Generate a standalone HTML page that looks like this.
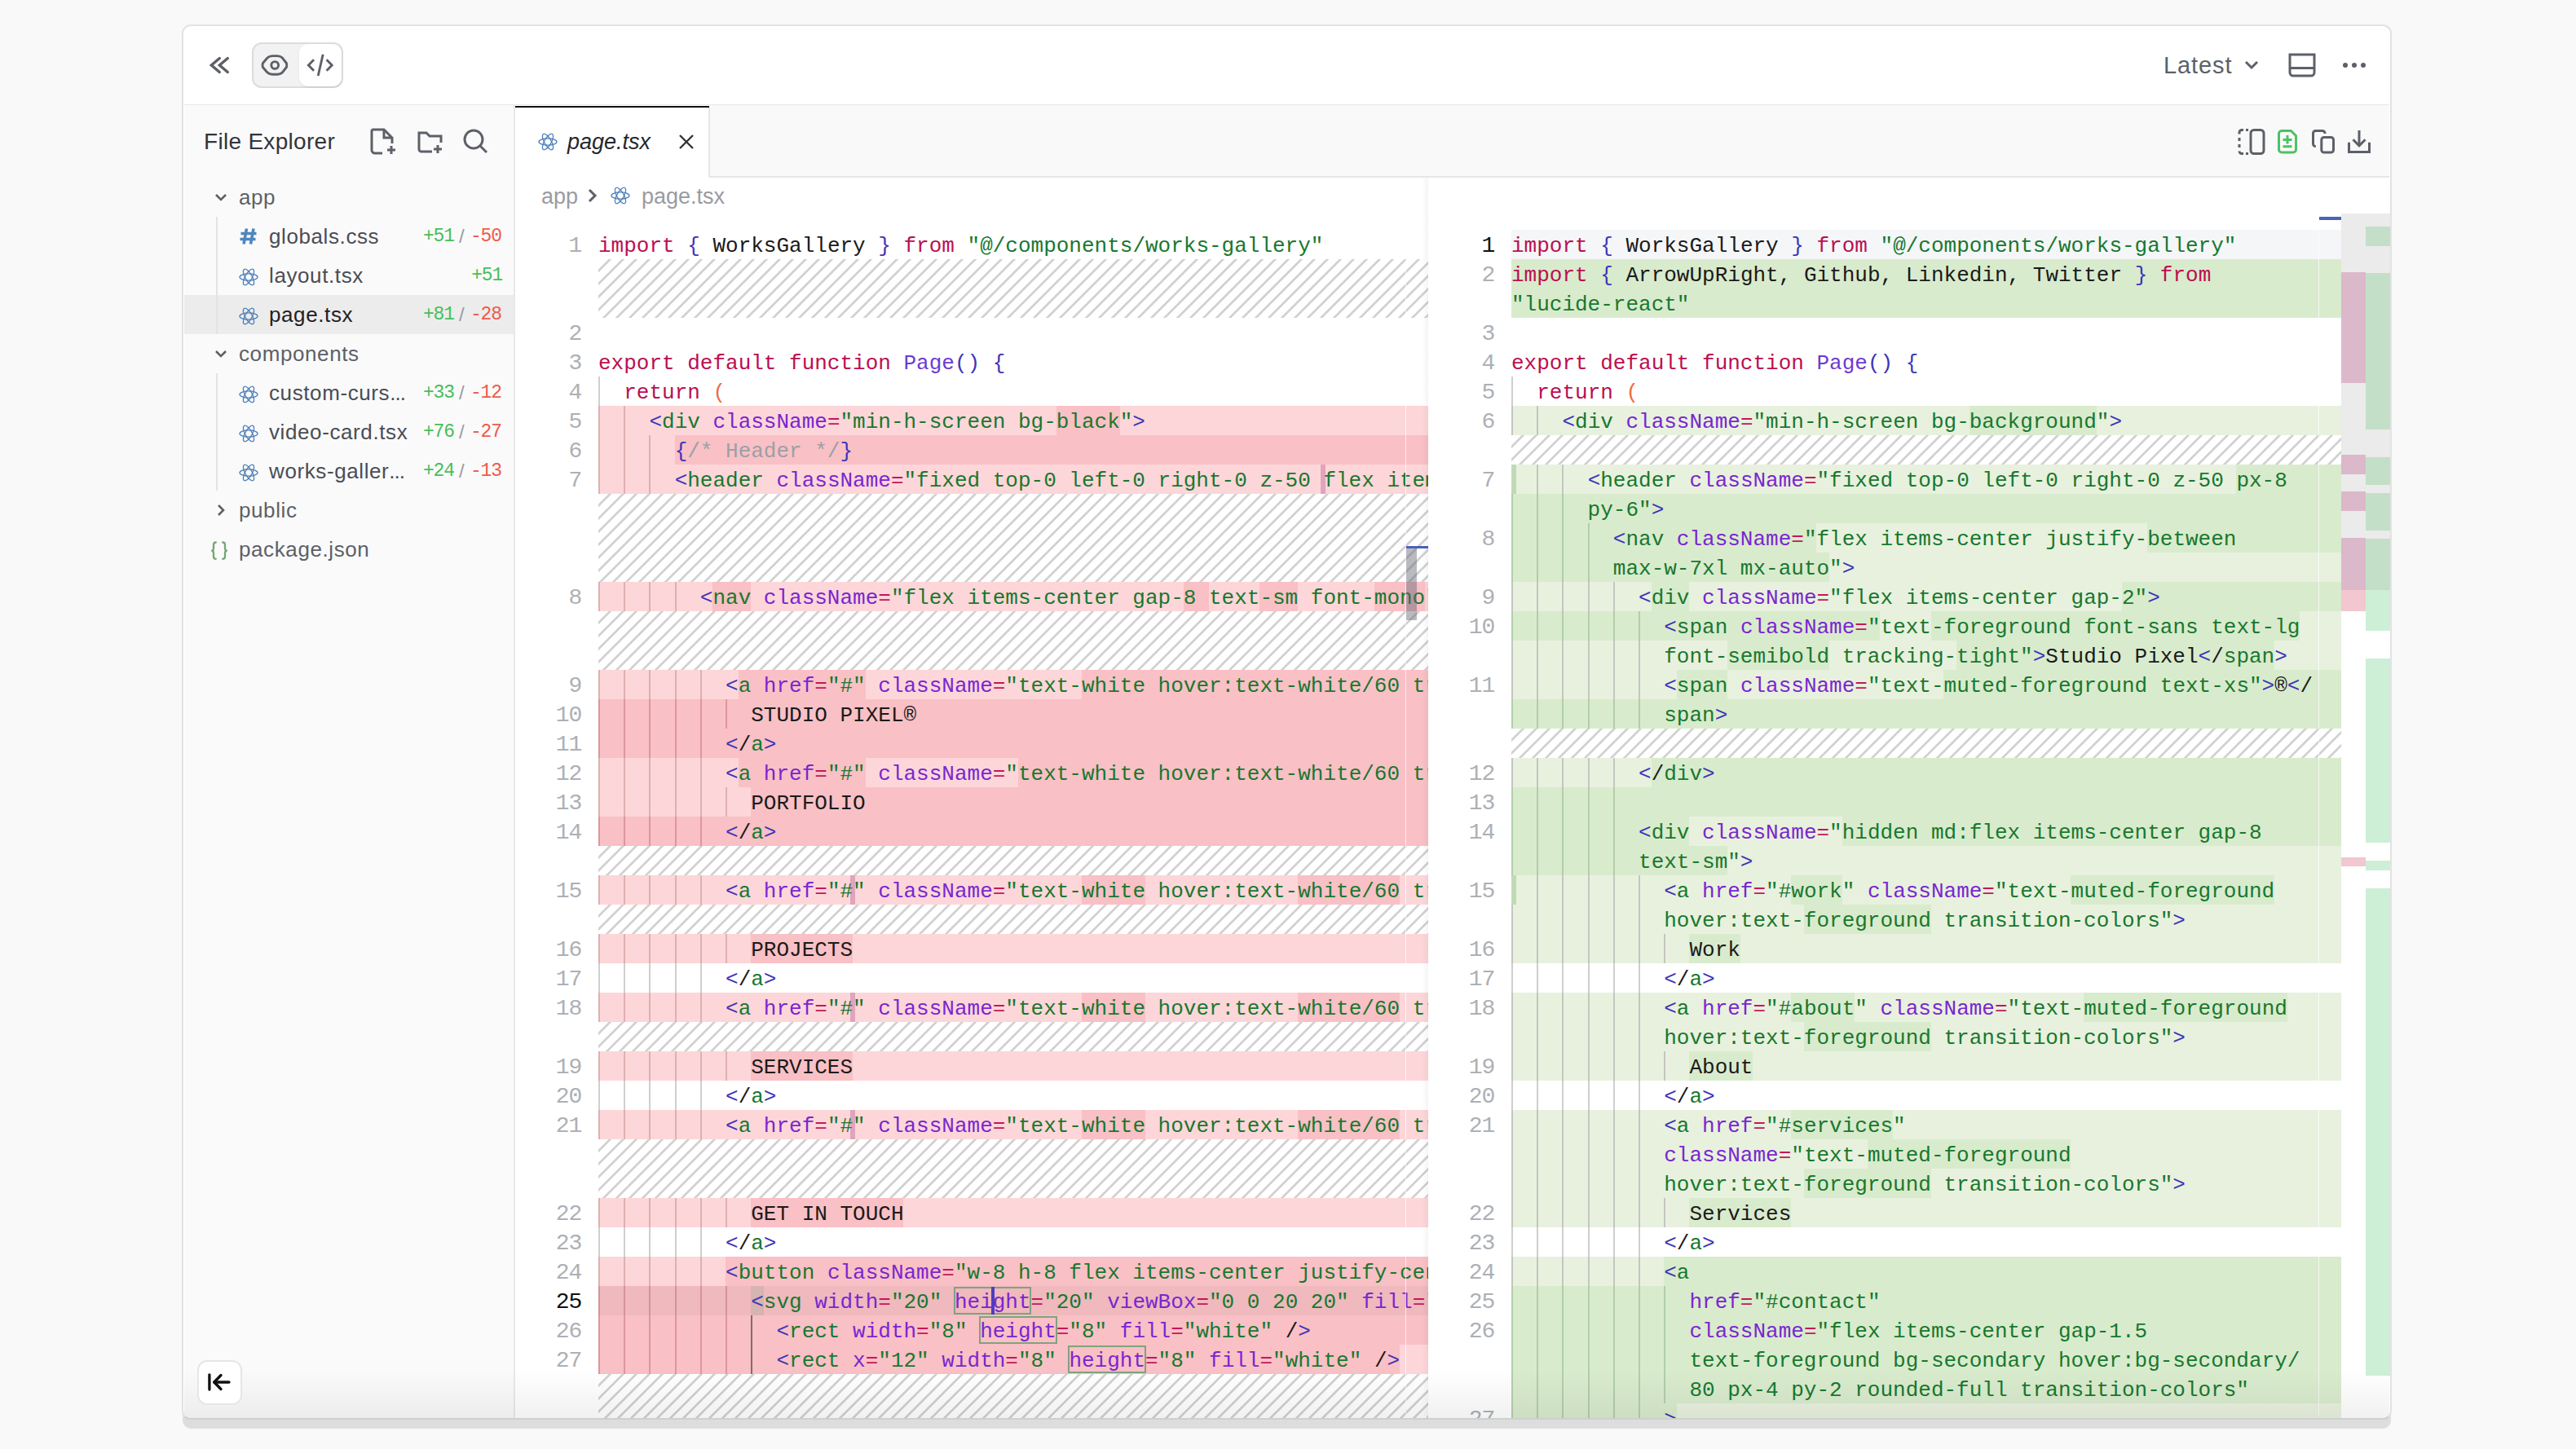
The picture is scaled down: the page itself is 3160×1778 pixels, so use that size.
<!DOCTYPE html><html><head><meta charset="utf-8"><style>
*{margin:0;padding:0;box-sizing:border-box}
html,body{width:3160px;height:1778px;overflow:hidden;background:#f9f9f9;font-family:"Liberation Sans",sans-serif}
.abs{position:absolute}
.card{position:absolute;left:223px;top:30px;width:2711px;height:1712px;background:#fff;border:2px solid #e1e3e3;border-bottom-color:#cdd1cd;border-radius:11px;overflow:hidden;box-shadow:0 12px 1px -1px rgba(0,0,0,0.11)}
.bg{position:absolute;height:36px}
.guide{position:absolute;width:2px;height:36px;background:rgba(0,0,0,0.18)}
.box{position:absolute;height:34px;border:2px solid #7fa37f}
.hatch{position:absolute;background-color:#fff;background-size:16px 16px;background-image:linear-gradient(-45deg,#d3d3d3 12.5%,rgba(211,211,211,0) 12.5%,rgba(211,211,211,0) 50%,#d3d3d3 50%,#d3d3d3 62.5%,rgba(211,211,211,0) 62.5%,rgba(211,211,211,0) 100%)}
.ln{position:absolute;width:80px;height:36px;text-align:right;font-family:"Liberation Mono",monospace;font-size:28px;letter-spacing:-1.2px;line-height:39px;color:#adb0b5}
.ln.cur{color:#111}
.code{position:absolute;height:36px;white-space:pre;font-family:"Liberation Mono",monospace;font-size:26px;letter-spacing:0.00px;line-height:40px;color:#1a1a1a}
.side{position:absolute;font-size:26px;letter-spacing:0.6px;color:#5d6068;white-space:pre;line-height:48px}
.stat{position:absolute;font-family:"Liberation Mono",monospace;font-size:23px;letter-spacing:-1.2px;line-height:48px;white-space:pre}
</style></head><body><div class="card"><div class="abs" style="left:-225px;top:-32px;width:3160px;height:1778px">
<div class="abs" style="left:226px;top:128px;width:2705px;height:2px;background:#e8e8e8"></div>
<div class="abs" style="left:226px;top:129px;width:404px;height:1611px;background:#fafafa"></div>
<div class="abs" style="left:630px;top:129px;width:2px;height:1611px;background:#e8e8e8"></div>
<div class="abs" style="left:632px;top:129px;width:2299px;height:87px;background:#f9f9f9"></div>
<div class="abs" style="left:632px;top:216px;width:2299px;height:2px;background:#e6e6e6"></div>
<div class="abs" style="left:632px;top:129px;width:238px;height:89px;background:#fff"></div>
<div class="abs" style="left:632px;top:130px;width:238px;height:2px;background:#111"></div>
<div class="abs" style="left:869px;top:132px;width:2px;height:85px;background:#e6e6e6"></div>
<svg class="abs" style="left:250px;top:62px" width="40" height="36" viewBox="0 0 40 36" fill="none" stroke="#5d6068" stroke-width="3.4" stroke-linecap="round" stroke-linejoin="miter"><path d="M19.3 9.5L9.3 18l10 8.5"/><path d="M29.3 9.5l-10 8.5 10 8.5"/></svg>
<div class="abs" style="left:309px;top:52px;width:112px;height:56px;border:2px solid #dcdcdc;border-radius:12px;background:#f2f2f2"></div>
<div class="abs" style="left:367px;top:54px;width:52px;height:52px;border-radius:11px;background:#fff;box-shadow:0 1px 2px rgba(0,0,0,0.10)"></div>
<svg class="abs" style="left:315px;top:62px" width="44" height="36" viewBox="0 0 44 36" fill="none" stroke="#5d6068" stroke-width="2.9" stroke-linejoin="round"><path d="M7.4 15.5L13.2 8.8Q15.6 6.6 19 6.6L25.4 6.6Q28.8 6.6 31.2 8.8L36.4 15.5Q37.2 18 36.4 20.5L31.2 27.2Q28.8 29.3 25.4 29.3L19 29.3Q15.6 29.3 13.2 27.2L7.4 20.5Q6.6 18 7.4 15.5Z"/><circle cx="22.2" cy="18" r="4.4"/></svg>
<svg class="abs" style="left:372px;top:62px" width="44" height="36" viewBox="0 0 44 36" fill="none" stroke="#5d6068" stroke-width="2.9" stroke-linecap="butt" stroke-linejoin="miter"><path d="M13 11.3L6.4 18l6.6 6.7"/><path d="M28.6 11.3l6.6 6.7-6.6 6.7"/><path d="M24.2 4.8L18.2 31"/></svg>
<div class="abs" style="left:2654px;top:50px;font-size:29px;line-height:60px;color:#5d6068;letter-spacing:0.9px">Latest</div>
<svg class="abs" style="left:2750px;top:70px" width="24" height="20" viewBox="0 0 24 20" fill="none" stroke="#5d6068" stroke-width="3"><path d="M5 6l7 7 7-7"/></svg>
<svg class="abs" style="left:2806px;top:64px" width="36" height="32" viewBox="0 0 36 32" fill="none" stroke="#5d6068" stroke-width="3"><path d="M3 3h30v22a4 4 0 0 1-4 4H7a4 4 0 0 1-4-4z"/><path d="M3 19.5h30"/></svg>
<div class="abs" style="left:2874px;top:77px;width:6px;height:6px;border-radius:50%;background:#5d6068"></div>
<div class="abs" style="left:2885px;top:77px;width:6px;height:6px;border-radius:50%;background:#5d6068"></div>
<div class="abs" style="left:2896px;top:77px;width:6px;height:6px;border-radius:50%;background:#5d6068"></div>
<div class="abs" style="left:250px;top:150px;font-size:28px;line-height:48px;color:#32353a;letter-spacing:0.3px">File Explorer</div>
<svg class="abs" style="left:452px;top:156px" width="36" height="36" viewBox="0 0 36 36" fill="none" stroke="#5d6068" stroke-width="3"><path d="M17 32H8a4 4 0 0 1-4-4V5a2 2 0 0 1 2-2h13l10 10v7"/><path d="M19 3v10h10"/><path d="M28 23v10M23 28h10"/></svg>
<svg class="abs" style="left:510px;top:156px" width="36" height="36" viewBox="0 0 36 36" fill="none" stroke="#5d6068" stroke-width="3"><path d="M20 30H7a3 3 0 0 1-3-3V7h9l4 4h14v8"/><path d="M27 22v10M22 27h10"/></svg>
<svg class="abs" style="left:566px;top:156px" width="36" height="36" viewBox="0 0 36 36" fill="none" stroke="#5d6068" stroke-width="3"><circle cx="15" cy="15" r="11"/><path d="M23 23l8 8"/></svg>
<div class="abs" style="left:226px;top:362px;width:404px;height:48px;background:#ececec"></div>
<div class="abs" style="left:265px;top:266px;width:2px;height:144px;background:#e3e3e3"></div>
<div class="abs" style="left:265px;top:458px;width:2px;height:144px;background:#e3e3e3"></div>
<svg class="abs" style="left:261px;top:232px" width="20" height="20" viewBox="0 0 20 20" fill="none" stroke="#5d6068" stroke-width="2.6"><path d="M4 7l6 6 6-6"/></svg>
<div class="side" style="left:293px;top:218px">app</div>
<svg class="abs" style="left:293px;top:279px" width="24" height="22" viewBox="0 0 24 22" fill="none" stroke="#4f86bd" stroke-width="3.6"><path d="M9.5 1.5L6 20.5M18 1.5l-3.5 19M2.5 7.5h19M1.5 14.5h19"/></svg>
<div class="side" style="left:330px;top:266px;color:#4a4d55">globals.css</div>
<div class="stat" style="left:519px;top:266px;color:#47bf5b">+51</div><div class="abs" style="left:563px;top:266px;font-size:24px;line-height:48px;color:#9b9ba5">/</div><div class="stat" style="left:577px;top:266px;color:#ef5b4c">-50</div>
<svg style="position:absolute;left:292.5px;top:327.5px" width="24" height="24" viewBox="0 0 24 24" fill="none" stroke="#4d7fb8" stroke-width="1.3"><ellipse cx="12" cy="12" rx="11" ry="4.2"/><ellipse cx="12" cy="12" rx="11" ry="4.2" transform="rotate(60 12 12)"/><ellipse cx="12" cy="12" rx="11" ry="4.2" transform="rotate(120 12 12)"/></svg>
<div class="side" style="left:330px;top:314px;color:#4a4d55">layout.tsx</div>
<div class="stat" style="left:500px;top:314px;width:116px;text-align:right;color:#47bf5b">+51</div>
<svg style="position:absolute;left:292.5px;top:375.5px" width="24" height="24" viewBox="0 0 24 24" fill="none" stroke="#4d7fb8" stroke-width="1.3"><ellipse cx="12" cy="12" rx="11" ry="4.2"/><ellipse cx="12" cy="12" rx="11" ry="4.2" transform="rotate(60 12 12)"/><ellipse cx="12" cy="12" rx="11" ry="4.2" transform="rotate(120 12 12)"/></svg>
<div class="side" style="left:330px;top:362px;color:#1f2024">page.tsx</div>
<div class="stat" style="left:519px;top:362px;color:#47bf5b">+81</div><div class="abs" style="left:563px;top:362px;font-size:24px;line-height:48px;color:#9b9ba5">/</div><div class="stat" style="left:577px;top:362px;color:#ef5b4c">-28</div>
<svg class="abs" style="left:261px;top:424px" width="20" height="20" viewBox="0 0 20 20" fill="none" stroke="#5d6068" stroke-width="2.6"><path d="M4 7l6 6 6-6"/></svg>
<div class="side" style="left:293px;top:410px">components</div>
<svg style="position:absolute;left:292.5px;top:471.5px" width="24" height="24" viewBox="0 0 24 24" fill="none" stroke="#4d7fb8" stroke-width="1.3"><ellipse cx="12" cy="12" rx="11" ry="4.2"/><ellipse cx="12" cy="12" rx="11" ry="4.2" transform="rotate(60 12 12)"/><ellipse cx="12" cy="12" rx="11" ry="4.2" transform="rotate(120 12 12)"/></svg>
<div class="side" style="left:330px;top:458px;color:#4a4d55">custom-curs<span style="letter-spacing:-1px">...</span></div>
<div class="stat" style="left:519px;top:458px;color:#47bf5b">+33</div><div class="abs" style="left:563px;top:458px;font-size:24px;line-height:48px;color:#9b9ba5">/</div><div class="stat" style="left:577px;top:458px;color:#ef5b4c">-12</div>
<svg style="position:absolute;left:292.5px;top:519.5px" width="24" height="24" viewBox="0 0 24 24" fill="none" stroke="#4d7fb8" stroke-width="1.3"><ellipse cx="12" cy="12" rx="11" ry="4.2"/><ellipse cx="12" cy="12" rx="11" ry="4.2" transform="rotate(60 12 12)"/><ellipse cx="12" cy="12" rx="11" ry="4.2" transform="rotate(120 12 12)"/></svg>
<div class="side" style="left:330px;top:506px;color:#4a4d55">video-card.tsx</div>
<div class="stat" style="left:519px;top:506px;color:#47bf5b">+76</div><div class="abs" style="left:563px;top:506px;font-size:24px;line-height:48px;color:#9b9ba5">/</div><div class="stat" style="left:577px;top:506px;color:#ef5b4c">-27</div>
<svg style="position:absolute;left:292.5px;top:567.5px" width="24" height="24" viewBox="0 0 24 24" fill="none" stroke="#4d7fb8" stroke-width="1.3"><ellipse cx="12" cy="12" rx="11" ry="4.2"/><ellipse cx="12" cy="12" rx="11" ry="4.2" transform="rotate(60 12 12)"/><ellipse cx="12" cy="12" rx="11" ry="4.2" transform="rotate(120 12 12)"/></svg>
<div class="side" style="left:330px;top:554px;color:#4a4d55">works-galler<span style="letter-spacing:-1px">...</span></div>
<div class="stat" style="left:519px;top:554px;color:#47bf5b">+24</div><div class="abs" style="left:563px;top:554px;font-size:24px;line-height:48px;color:#9b9ba5">/</div><div class="stat" style="left:577px;top:554px;color:#ef5b4c">-13</div>
<svg class="abs" style="left:261px;top:616px" width="20" height="20" viewBox="0 0 20 20" fill="none" stroke="#5d6068" stroke-width="2.6"><path d="M7 4l6 6-6 6"/></svg>
<div class="side" style="left:293px;top:602px">public</div>
<svg class="abs" style="left:254px;top:660px" width="32" height="32" viewBox="0 0 32 32" fill="none" stroke="#74a874" stroke-width="2.3" stroke-linecap="round"><path d="M10.8 5.5Q8 5.5 8 8.3V13Q8 15.7 5.2 15.7Q8 15.7 8 18.4V23Q8 25.8 10.8 25.8"/><path d="M19.2 5.5Q22 5.5 22 8.3V13Q22 15.7 24.8 15.7Q22 15.7 22 18.4V23Q22 25.8 19.2 25.8"/></svg>
<div class="side" style="left:293px;top:650px">package.json</div>
<svg style="position:absolute;left:660.0px;top:162.0px" width="24" height="24" viewBox="0 0 24 24" fill="none" stroke="#4d7fb8" stroke-width="1.3"><ellipse cx="12" cy="12" rx="11" ry="4.2"/><ellipse cx="12" cy="12" rx="11" ry="4.2" transform="rotate(60 12 12)"/><ellipse cx="12" cy="12" rx="11" ry="4.2" transform="rotate(120 12 12)"/></svg>
<div class="abs" style="left:696px;top:150px;font-size:27px;font-style:italic;line-height:48px;color:#26272b">page.tsx</div>
<svg class="abs" style="left:831px;top:163px" width="22" height="22" viewBox="0 0 22 22" fill="none" stroke="#333" stroke-width="2.4"><path d="M3 3l16 16M19 3L3 19"/></svg>
<svg class="abs" style="left:2744px;top:156px" width="36" height="36" viewBox="0 0 36 36" fill="none" stroke="#5d6068" stroke-width="3"><path d="M8 3.5H6a3 3 0 0 0-3 3v2M3 13v4M3 21v4M3 29.5v0a3 3 0 0 0 3 3h2" stroke-linecap="butt"/><path d="M11 3.5h3M11 32.5h3"/><rect x="17" y="3.5" width="16" height="29" rx="4"/></svg>
<svg class="abs" style="left:2790px;top:155px" width="34" height="38" viewBox="0 0 34 38" fill="none" stroke="#4cc265" stroke-width="3"><path d="M9 5.5H20.4L26.5 11.6V28.5A3.5 3.5 0 0 1 23 32H9A3.5 3.5 0 0 1 5.5 28.5V9A3.5 3.5 0 0 1 9 5.5Z"/><path d="M16 11v10.4M10.5 16.5h11M10.5 24.7h11"/></svg>
<svg class="abs" style="left:2830px;top:155px" width="38" height="38" viewBox="0 0 38 38" fill="none" stroke="#5d6068" stroke-width="3"><rect x="17.8" y="13.5" width="14.7" height="18.5" rx="3"/><path d="M10.8 24.5H10.5A3 3 0 0 1 7.5 21.5V8.5A3 3 0 0 1 10.5 5.5H19A3 3 0 0 1 22 8.5V9"/></svg>
<svg class="abs" style="left:2876px;top:155px" width="36" height="36" viewBox="0 0 36 36" fill="none" stroke="#5d6068" stroke-width="3"><path d="M5.5 19.8V31.5H30.5V19.8"/><path d="M18 5V23.5"/><path d="M10.5 16.3l7.5 7.5 7.5-7.5"/></svg>
<div class="abs" style="left:664px;top:217px;font-size:27px;line-height:48px;color:#9a9ba3">app</div>
<svg class="abs" style="left:716px;top:230px" width="20" height="20" viewBox="0 0 20 20" fill="none" stroke="#5d6068" stroke-width="3"><path d="M7 3l7 7-7 7"/></svg>
<svg style="position:absolute;left:749.0px;top:228.0px" width="24" height="24" viewBox="0 0 24 24" fill="none" stroke="#4d7fb8" stroke-width="1.3"><ellipse cx="12" cy="12" rx="11" ry="4.2"/><ellipse cx="12" cy="12" rx="11" ry="4.2" transform="rotate(60 12 12)"/><ellipse cx="12" cy="12" rx="11" ry="4.2" transform="rotate(120 12 12)"/></svg>
<div class="abs" style="left:787px;top:217px;font-size:27px;line-height:48px;color:#9a9ba3">page.tsx</div>
<div class="abs" style="left:632px;top:218px;width:1120px;height:1522px;overflow:hidden">
<div class="abs" style="left:-632px;top:-218px;width:3160px;height:1778px">
<div class="ln" style="left:633px;top:282px">1</div>
<div class="code" style="left:734.0px;top:282px"><span style="color:#bb0e52">import</span> <span style="color:#3d35b8">{</span> <span style="color:#1a1a1a">WorksGallery</span> <span style="color:#3d35b8">}</span> <span style="color:#bb0e52">from</span> <span style="color:#18782f">&quot;@/components/works-gallery&quot;</span></div>
<div class="hatch" style="left:734px;top:318px;width:1018px;height:72px"></div><div class="hatch" style="left:1725px;top:318px;width:27px;height:72px;background-position:1px 0"></div>
<div class="ln" style="left:633px;top:390px">2</div>
<div class="ln" style="left:633px;top:426px">3</div>
<div class="code" style="left:734.0px;top:426px"><span style="color:#bb0e52">export</span> <span style="color:#bb0e52">default</span> <span style="color:#bb0e52">function</span> <span style="color:#6b3bd2">Page</span><span style="color:#3d35b8">(</span><span style="color:#3d35b8">)</span> <span style="color:#3d35b8">{</span></div>
<div class="guide" style="left:734.0px;top:462px;background:#cfcfcf"></div>
<div class="ln" style="left:633px;top:462px">4</div>
<div class="code" style="left:734.0px;top:462px">  <span style="color:#bb0e52">return</span> <span style="color:#ee6a43">(</span></div>
<div class="bg" style="left:734px;top:498px;width:1018px;background:#fdd6d9"></div>
<div class="bg" style="left:1295.6px;top:498px;width:78.0px;background:#f9c0c5"></div>
<div class="guide" style="left:734.0px;top:498px;background:#dfb0b0"></div>
<div class="guide" style="left:765.2px;top:498px;background:#dfb0b0"></div>
<div class="ln" style="left:633px;top:498px">5</div>
<div class="code" style="left:734.0px;top:498px">    <span style="color:#3d35b8">&lt;</span><span style="color:#18782f">div</span> <span style="color:#7a26d0">className</span><span style="color:#c2185b">=</span><span style="color:#18782f">&quot;min-h-screen bg-black&quot;</span><span style="color:#3d35b8">&gt;</span></div>
<div class="bg" style="left:734px;top:534px;width:1018px;background:#fdd6d9"></div>
<div class="bg" style="left:827.6px;top:534px;width:924.4px;background:#f9c0c5"></div>
<div class="guide" style="left:734.0px;top:534px;background:#dfb0b0"></div>
<div class="guide" style="left:765.2px;top:534px;background:#dfb0b0"></div>
<div class="guide" style="left:796.4px;top:534px;background:#dfb0b0"></div>
<div class="ln" style="left:633px;top:534px">6</div>
<div class="code" style="left:734.0px;top:534px">      <span style="color:#3d35b8">{</span><span style="color:#9aa0a7">/* Header */</span><span style="color:#3d35b8">}</span></div>
<div class="bg" style="left:734px;top:570px;width:1018px;background:#fdd6d9"></div>
<div class="guide" style="left:734.0px;top:570px;background:#dfb0b0"></div>
<div class="guide" style="left:765.2px;top:570px;background:#dfb0b0"></div>
<div class="guide" style="left:796.4px;top:570px;background:#dfb0b0"></div>
<div class="bg" style="left:1620.2px;top:570px;width:6px;background:#e2a3bd"></div>
<div class="ln" style="left:633px;top:570px">7</div>
<div class="code" style="left:734.0px;top:570px">      <span style="color:#3d35b8">&lt;</span><span style="color:#18782f">header</span> <span style="color:#7a26d0">className</span><span style="color:#c2185b">=</span><span style="color:#18782f">&quot;fixed top-0 left-0 right-0 z-50 flex items-center justify-between</span></div>
<div class="hatch" style="left:734px;top:606px;width:1018px;height:108px"></div><div class="hatch" style="left:1725px;top:606px;width:27px;height:108px;background-position:1px 0"></div>
<div class="bg" style="left:734px;top:714px;width:1018px;background:#fdd6d9"></div>
<div class="bg" style="left:874.4px;top:714px;width:46.8px;background:#f9c0c5"></div>
<div class="bg" style="left:1451.6px;top:714px;width:31.2px;background:#f9c0c5"></div>
<div class="bg" style="left:1545.2px;top:714px;width:46.8px;background:#f9c0c5"></div>
<div class="bg" style="left:1685.6px;top:714px;width:62.4px;background:#f9c0c5"></div>
<div class="guide" style="left:734.0px;top:714px;background:#dfb0b0"></div>
<div class="guide" style="left:765.2px;top:714px;background:#dfb0b0"></div>
<div class="guide" style="left:796.4px;top:714px;background:#dfb0b0"></div>
<div class="guide" style="left:827.6px;top:714px;background:#dfb0b0"></div>
<div class="ln" style="left:633px;top:714px">8</div>
<div class="code" style="left:734.0px;top:714px">        <span style="color:#3d35b8">&lt;</span><span style="color:#18782f">nav</span> <span style="color:#7a26d0">className</span><span style="color:#c2185b">=</span><span style="color:#18782f">&quot;flex items-center gap-8 text-sm font-mono&quot;</span><span style="color:#3d35b8">&gt;</span></div>
<div class="hatch" style="left:734px;top:750px;width:1018px;height:72px"></div><div class="hatch" style="left:1725px;top:750px;width:27px;height:72px;background-position:1px 0"></div>
<div class="bg" style="left:734px;top:822px;width:1018px;background:#fdd6d9"></div>
<div class="bg" style="left:905.6px;top:822px;width:156.0px;background:#f9c0c5"></div>
<div class="bg" style="left:1326.8px;top:822px;width:425.2px;background:#f9c0c5"></div>
<div class="guide" style="left:734.0px;top:822px;background:#dfb0b0"></div>
<div class="guide" style="left:765.2px;top:822px;background:#dfb0b0"></div>
<div class="guide" style="left:796.4px;top:822px;background:#dfb0b0"></div>
<div class="guide" style="left:827.6px;top:822px;background:#dfb0b0"></div>
<div class="guide" style="left:858.8px;top:822px;background:#dfb0b0"></div>
<div class="ln" style="left:633px;top:822px">9</div>
<div class="code" style="left:734.0px;top:822px">          <span style="color:#3d35b8">&lt;</span><span style="color:#18782f">a</span> <span style="color:#7a26d0">href</span><span style="color:#c2185b">=</span><span style="color:#18782f">&quot;#&quot;</span> <span style="color:#7a26d0">className</span><span style="color:#c2185b">=</span><span style="color:#18782f">&quot;text-white hover:text-white/60 transition-colors&quot;</span><span style="color:#3d35b8">&gt;</span></div>
<div class="bg" style="left:734px;top:858px;width:1018px;background:#f9c0c5"></div>
<div class="guide" style="left:734.0px;top:858px;background:#dc969e"></div>
<div class="guide" style="left:765.2px;top:858px;background:#dc969e"></div>
<div class="guide" style="left:796.4px;top:858px;background:#dc969e"></div>
<div class="guide" style="left:827.6px;top:858px;background:#dc969e"></div>
<div class="guide" style="left:858.8px;top:858px;background:#dc969e"></div>
<div class="guide" style="left:890.0px;top:858px;background:#dc969e"></div>
<div class="ln" style="left:633px;top:858px">10</div>
<div class="code" style="left:734.0px;top:858px">            <span style="color:#1a1a1a">STUDIO</span> <span style="color:#1a1a1a">PIXEL</span><span style="color:#1a1a1a">®</span></div>
<div class="bg" style="left:734px;top:894px;width:1018px;background:#f9c0c5"></div>
<div class="guide" style="left:734.0px;top:894px;background:#dc969e"></div>
<div class="guide" style="left:765.2px;top:894px;background:#dc969e"></div>
<div class="guide" style="left:796.4px;top:894px;background:#dc969e"></div>
<div class="guide" style="left:827.6px;top:894px;background:#dc969e"></div>
<div class="guide" style="left:858.8px;top:894px;background:#dc969e"></div>
<div class="ln" style="left:633px;top:894px">11</div>
<div class="code" style="left:734.0px;top:894px">          <span style="color:#3d35b8">&lt;</span><span style="color:#1a1a1a">/</span><span style="color:#18782f">a</span><span style="color:#3d35b8">&gt;</span></div>
<div class="bg" style="left:734px;top:930px;width:1018px;background:#fdd6d9"></div>
<div class="bg" style="left:905.6px;top:930px;width:156.0px;background:#f9c0c5"></div>
<div class="bg" style="left:1248.8px;top:930px;width:503.2px;background:#f9c0c5"></div>
<div class="guide" style="left:734.0px;top:930px;background:#dfb0b0"></div>
<div class="guide" style="left:765.2px;top:930px;background:#dfb0b0"></div>
<div class="guide" style="left:796.4px;top:930px;background:#dfb0b0"></div>
<div class="guide" style="left:827.6px;top:930px;background:#dfb0b0"></div>
<div class="guide" style="left:858.8px;top:930px;background:#dfb0b0"></div>
<div class="ln" style="left:633px;top:930px">12</div>
<div class="code" style="left:734.0px;top:930px">          <span style="color:#3d35b8">&lt;</span><span style="color:#18782f">a</span> <span style="color:#7a26d0">href</span><span style="color:#c2185b">=</span><span style="color:#18782f">&quot;#&quot;</span> <span style="color:#7a26d0">className</span><span style="color:#c2185b">=</span><span style="color:#18782f">&quot;text-white hover:text-white/60 transition-colors&quot;</span><span style="color:#3d35b8">&gt;</span></div>
<div class="bg" style="left:734px;top:966px;width:1018px;background:#fdd6d9"></div>
<div class="bg" style="left:921.2px;top:966px;width:830.8px;background:#f9c0c5"></div>
<div class="guide" style="left:734.0px;top:966px;background:#dfb0b0"></div>
<div class="guide" style="left:765.2px;top:966px;background:#dfb0b0"></div>
<div class="guide" style="left:796.4px;top:966px;background:#dfb0b0"></div>
<div class="guide" style="left:827.6px;top:966px;background:#dfb0b0"></div>
<div class="guide" style="left:858.8px;top:966px;background:#dfb0b0"></div>
<div class="guide" style="left:890.0px;top:966px;background:#dfb0b0"></div>
<div class="ln" style="left:633px;top:966px">13</div>
<div class="code" style="left:734.0px;top:966px">            <span style="color:#1a1a1a">PORTFOLIO</span></div>
<div class="bg" style="left:734px;top:1002px;width:1018px;background:#f9c0c5"></div>
<div class="guide" style="left:734.0px;top:1002px;background:#dc969e"></div>
<div class="guide" style="left:765.2px;top:1002px;background:#dc969e"></div>
<div class="guide" style="left:796.4px;top:1002px;background:#dc969e"></div>
<div class="guide" style="left:827.6px;top:1002px;background:#dc969e"></div>
<div class="guide" style="left:858.8px;top:1002px;background:#dc969e"></div>
<div class="ln" style="left:633px;top:1002px">14</div>
<div class="code" style="left:734.0px;top:1002px">          <span style="color:#3d35b8">&lt;</span><span style="color:#1a1a1a">/</span><span style="color:#18782f">a</span><span style="color:#3d35b8">&gt;</span></div>
<div class="hatch" style="left:734px;top:1038px;width:1018px;height:36px"></div><div class="hatch" style="left:1725px;top:1038px;width:27px;height:36px;background-position:1px 0"></div>
<div class="bg" style="left:734px;top:1074px;width:1018px;background:#fdd6d9"></div>
<div class="bg" style="left:1326.8px;top:1074px;width:78.0px;background:#f9c0c5"></div>
<div class="bg" style="left:1592.0px;top:1074px;width:124.8px;background:#f9c0c5"></div>
<div class="guide" style="left:734.0px;top:1074px;background:#dfb0b0"></div>
<div class="guide" style="left:765.2px;top:1074px;background:#dfb0b0"></div>
<div class="guide" style="left:796.4px;top:1074px;background:#dfb0b0"></div>
<div class="guide" style="left:827.6px;top:1074px;background:#dfb0b0"></div>
<div class="guide" style="left:858.8px;top:1074px;background:#dfb0b0"></div>
<div class="bg" style="left:1043.0px;top:1074px;width:6px;background:#e2a3bd"></div>
<div class="ln" style="left:633px;top:1074px">15</div>
<div class="code" style="left:734.0px;top:1074px">          <span style="color:#3d35b8">&lt;</span><span style="color:#18782f">a</span> <span style="color:#7a26d0">href</span><span style="color:#c2185b">=</span><span style="color:#18782f">&quot;#&quot;</span> <span style="color:#7a26d0">className</span><span style="color:#c2185b">=</span><span style="color:#18782f">&quot;text-white hover:text-white/60 transition-colors&quot;</span><span style="color:#3d35b8">&gt;</span></div>
<div class="hatch" style="left:734px;top:1110px;width:1018px;height:36px"></div><div class="hatch" style="left:1725px;top:1110px;width:27px;height:36px;background-position:1px 0"></div>
<div class="bg" style="left:734px;top:1146px;width:1018px;background:#fdd6d9"></div>
<div class="bg" style="left:921.2px;top:1146px;width:124.8px;background:#f9c0c5"></div>
<div class="guide" style="left:734.0px;top:1146px;background:#dfb0b0"></div>
<div class="guide" style="left:765.2px;top:1146px;background:#dfb0b0"></div>
<div class="guide" style="left:796.4px;top:1146px;background:#dfb0b0"></div>
<div class="guide" style="left:827.6px;top:1146px;background:#dfb0b0"></div>
<div class="guide" style="left:858.8px;top:1146px;background:#dfb0b0"></div>
<div class="guide" style="left:890.0px;top:1146px;background:#dfb0b0"></div>
<div class="ln" style="left:633px;top:1146px">16</div>
<div class="code" style="left:734.0px;top:1146px">            <span style="color:#1a1a1a">PROJECTS</span></div>
<div class="guide" style="left:734.0px;top:1182px;background:#cfcfcf"></div>
<div class="guide" style="left:765.2px;top:1182px;background:#cfcfcf"></div>
<div class="guide" style="left:796.4px;top:1182px;background:#cfcfcf"></div>
<div class="guide" style="left:827.6px;top:1182px;background:#cfcfcf"></div>
<div class="guide" style="left:858.8px;top:1182px;background:#cfcfcf"></div>
<div class="ln" style="left:633px;top:1182px">17</div>
<div class="code" style="left:734.0px;top:1182px">          <span style="color:#3d35b8">&lt;</span><span style="color:#1a1a1a">/</span><span style="color:#18782f">a</span><span style="color:#3d35b8">&gt;</span></div>
<div class="bg" style="left:734px;top:1218px;width:1018px;background:#fdd6d9"></div>
<div class="bg" style="left:1326.8px;top:1218px;width:78.0px;background:#f9c0c5"></div>
<div class="bg" style="left:1592.0px;top:1218px;width:124.8px;background:#f9c0c5"></div>
<div class="guide" style="left:734.0px;top:1218px;background:#dfb0b0"></div>
<div class="guide" style="left:765.2px;top:1218px;background:#dfb0b0"></div>
<div class="guide" style="left:796.4px;top:1218px;background:#dfb0b0"></div>
<div class="guide" style="left:827.6px;top:1218px;background:#dfb0b0"></div>
<div class="guide" style="left:858.8px;top:1218px;background:#dfb0b0"></div>
<div class="bg" style="left:1043.0px;top:1218px;width:6px;background:#e2a3bd"></div>
<div class="ln" style="left:633px;top:1218px">18</div>
<div class="code" style="left:734.0px;top:1218px">          <span style="color:#3d35b8">&lt;</span><span style="color:#18782f">a</span> <span style="color:#7a26d0">href</span><span style="color:#c2185b">=</span><span style="color:#18782f">&quot;#&quot;</span> <span style="color:#7a26d0">className</span><span style="color:#c2185b">=</span><span style="color:#18782f">&quot;text-white hover:text-white/60 transition-colors&quot;</span><span style="color:#3d35b8">&gt;</span></div>
<div class="hatch" style="left:734px;top:1254px;width:1018px;height:36px"></div><div class="hatch" style="left:1725px;top:1254px;width:27px;height:36px;background-position:1px 0"></div>
<div class="bg" style="left:734px;top:1290px;width:1018px;background:#fdd6d9"></div>
<div class="bg" style="left:921.2px;top:1290px;width:124.8px;background:#f9c0c5"></div>
<div class="guide" style="left:734.0px;top:1290px;background:#dfb0b0"></div>
<div class="guide" style="left:765.2px;top:1290px;background:#dfb0b0"></div>
<div class="guide" style="left:796.4px;top:1290px;background:#dfb0b0"></div>
<div class="guide" style="left:827.6px;top:1290px;background:#dfb0b0"></div>
<div class="guide" style="left:858.8px;top:1290px;background:#dfb0b0"></div>
<div class="guide" style="left:890.0px;top:1290px;background:#dfb0b0"></div>
<div class="ln" style="left:633px;top:1290px">19</div>
<div class="code" style="left:734.0px;top:1290px">            <span style="color:#1a1a1a">SERVICES</span></div>
<div class="guide" style="left:734.0px;top:1326px;background:#cfcfcf"></div>
<div class="guide" style="left:765.2px;top:1326px;background:#cfcfcf"></div>
<div class="guide" style="left:796.4px;top:1326px;background:#cfcfcf"></div>
<div class="guide" style="left:827.6px;top:1326px;background:#cfcfcf"></div>
<div class="guide" style="left:858.8px;top:1326px;background:#cfcfcf"></div>
<div class="ln" style="left:633px;top:1326px">20</div>
<div class="code" style="left:734.0px;top:1326px">          <span style="color:#3d35b8">&lt;</span><span style="color:#1a1a1a">/</span><span style="color:#18782f">a</span><span style="color:#3d35b8">&gt;</span></div>
<div class="bg" style="left:734px;top:1362px;width:1018px;background:#fdd6d9"></div>
<div class="bg" style="left:1326.8px;top:1362px;width:78.0px;background:#f9c0c5"></div>
<div class="bg" style="left:1592.0px;top:1362px;width:124.8px;background:#f9c0c5"></div>
<div class="guide" style="left:734.0px;top:1362px;background:#dfb0b0"></div>
<div class="guide" style="left:765.2px;top:1362px;background:#dfb0b0"></div>
<div class="guide" style="left:796.4px;top:1362px;background:#dfb0b0"></div>
<div class="guide" style="left:827.6px;top:1362px;background:#dfb0b0"></div>
<div class="guide" style="left:858.8px;top:1362px;background:#dfb0b0"></div>
<div class="bg" style="left:1043.0px;top:1362px;width:6px;background:#e2a3bd"></div>
<div class="ln" style="left:633px;top:1362px">21</div>
<div class="code" style="left:734.0px;top:1362px">          <span style="color:#3d35b8">&lt;</span><span style="color:#18782f">a</span> <span style="color:#7a26d0">href</span><span style="color:#c2185b">=</span><span style="color:#18782f">&quot;#&quot;</span> <span style="color:#7a26d0">className</span><span style="color:#c2185b">=</span><span style="color:#18782f">&quot;text-white hover:text-white/60 transition-colors&quot;</span><span style="color:#3d35b8">&gt;</span></div>
<div class="hatch" style="left:734px;top:1398px;width:1018px;height:72px"></div><div class="hatch" style="left:1725px;top:1398px;width:27px;height:72px;background-position:1px 0"></div>
<div class="bg" style="left:734px;top:1470px;width:1018px;background:#fdd6d9"></div>
<div class="bg" style="left:921.2px;top:1470px;width:187.2px;background:#f9c0c5"></div>
<div class="guide" style="left:734.0px;top:1470px;background:#dfb0b0"></div>
<div class="guide" style="left:765.2px;top:1470px;background:#dfb0b0"></div>
<div class="guide" style="left:796.4px;top:1470px;background:#dfb0b0"></div>
<div class="guide" style="left:827.6px;top:1470px;background:#dfb0b0"></div>
<div class="guide" style="left:858.8px;top:1470px;background:#dfb0b0"></div>
<div class="guide" style="left:890.0px;top:1470px;background:#dfb0b0"></div>
<div class="ln" style="left:633px;top:1470px">22</div>
<div class="code" style="left:734.0px;top:1470px">            <span style="color:#1a1a1a">GET</span> <span style="color:#1a1a1a">IN</span> <span style="color:#1a1a1a">TOUCH</span></div>
<div class="guide" style="left:734.0px;top:1506px;background:#cfcfcf"></div>
<div class="guide" style="left:765.2px;top:1506px;background:#cfcfcf"></div>
<div class="guide" style="left:796.4px;top:1506px;background:#cfcfcf"></div>
<div class="guide" style="left:827.6px;top:1506px;background:#cfcfcf"></div>
<div class="guide" style="left:858.8px;top:1506px;background:#cfcfcf"></div>
<div class="ln" style="left:633px;top:1506px">23</div>
<div class="code" style="left:734.0px;top:1506px">          <span style="color:#3d35b8">&lt;</span><span style="color:#1a1a1a">/</span><span style="color:#18782f">a</span><span style="color:#3d35b8">&gt;</span></div>
<div class="bg" style="left:734px;top:1542px;width:1018px;background:#fdd6d9"></div>
<div class="bg" style="left:890.0px;top:1542px;width:862.0px;background:#f9c0c5"></div>
<div class="guide" style="left:734.0px;top:1542px;background:#dfb0b0"></div>
<div class="guide" style="left:765.2px;top:1542px;background:#dfb0b0"></div>
<div class="guide" style="left:796.4px;top:1542px;background:#dfb0b0"></div>
<div class="guide" style="left:827.6px;top:1542px;background:#dfb0b0"></div>
<div class="guide" style="left:858.8px;top:1542px;background:#dfb0b0"></div>
<div class="ln" style="left:633px;top:1542px">24</div>
<div class="code" style="left:734.0px;top:1542px">          <span style="color:#3d35b8">&lt;</span><span style="color:#18782f">button</span> <span style="color:#7a26d0">className</span><span style="color:#c2185b">=</span><span style="color:#18782f">&quot;w-8 h-8 flex items-center justify-center&quot;</span><span style="color:#3d35b8">&gt;</span></div>
<div class="bg" style="left:734px;top:1578px;width:1018px;background:#efb9bd"></div>
<div class="guide" style="left:734.0px;top:1578px;background:#d4939b"></div>
<div class="guide" style="left:765.2px;top:1578px;background:#d4939b"></div>
<div class="guide" style="left:796.4px;top:1578px;background:#d4939b"></div>
<div class="guide" style="left:827.6px;top:1578px;background:#d4939b"></div>
<div class="guide" style="left:858.8px;top:1578px;background:#d4939b"></div>
<div class="guide" style="left:890.0px;top:1578px;background:#d4939b"></div>
<div class="box" style="left:1169.8px;top:1579px;width:95.6px"></div>
<div class="bg" style="left:921.2px;top:1578px;width:15.6px;background:#d6b4b0"></div>
<div class="abs" style="left:1215.6px;top:1579px;width:4px;height:34px;background:#4b3fc0"></div>
<div class="ln cur" style="left:633px;top:1578px">25</div>
<div class="code" style="left:734.0px;top:1578px">            <span style="color:#3d35b8">&lt;</span><span style="color:#18782f">svg</span> <span style="color:#7a26d0">width</span><span style="color:#c2185b">=</span><span style="color:#18782f">&quot;20&quot;</span> <span style="color:#7a26d0">height</span><span style="color:#c2185b">=</span><span style="color:#18782f">&quot;20&quot;</span> <span style="color:#7a26d0">viewBox</span><span style="color:#c2185b">=</span><span style="color:#18782f">&quot;0 0 20 20&quot;</span> <span style="color:#7a26d0">fill</span><span style="color:#c2185b">=</span><span style="color:#18782f">&quot;none&quot;</span><span style="color:#3d35b8">&gt;</span></div>
<div class="bg" style="left:734px;top:1614px;width:1018px;background:#f9c0c5"></div>
<div class="guide" style="left:734.0px;top:1614px;background:#dc969e"></div>
<div class="guide" style="left:765.2px;top:1614px;background:#dc969e"></div>
<div class="guide" style="left:796.4px;top:1614px;background:#dc969e"></div>
<div class="guide" style="left:827.6px;top:1614px;background:#dc969e"></div>
<div class="guide" style="left:858.8px;top:1614px;background:#dc969e"></div>
<div class="guide" style="left:890.0px;top:1614px;background:#dc969e"></div>
<div class="guide" style="left:921.2px;top:1614px;background:#7d6c6e"></div>
<div class="box" style="left:1201.0px;top:1615px;width:95.6px"></div>
<div class="ln" style="left:633px;top:1614px">26</div>
<div class="code" style="left:734.0px;top:1614px">              <span style="color:#3d35b8">&lt;</span><span style="color:#18782f">rect</span> <span style="color:#7a26d0">width</span><span style="color:#c2185b">=</span><span style="color:#18782f">&quot;8&quot;</span> <span style="color:#7a26d0">height</span><span style="color:#c2185b">=</span><span style="color:#18782f">&quot;8&quot;</span> <span style="color:#7a26d0">fill</span><span style="color:#c2185b">=</span><span style="color:#18782f">&quot;white&quot;</span> <span style="color:#1a1a1a">/</span><span style="color:#3d35b8">&gt;</span></div>
<div class="bg" style="left:734px;top:1650px;width:1018px;background:#fdd6d9"></div>
<div class="bg" style="left:734.0px;top:1650px;width:982.8px;background:#f9c0c5"></div>
<div class="guide" style="left:734.0px;top:1650px;background:#dc969e"></div>
<div class="guide" style="left:765.2px;top:1650px;background:#dc969e"></div>
<div class="guide" style="left:796.4px;top:1650px;background:#dc969e"></div>
<div class="guide" style="left:827.6px;top:1650px;background:#dc969e"></div>
<div class="guide" style="left:858.8px;top:1650px;background:#dc969e"></div>
<div class="guide" style="left:890.0px;top:1650px;background:#dc969e"></div>
<div class="guide" style="left:921.2px;top:1650px;background:#7d6c6e"></div>
<div class="box" style="left:1310.2px;top:1651px;width:95.6px"></div>
<div class="ln" style="left:633px;top:1650px">27</div>
<div class="code" style="left:734.0px;top:1650px">              <span style="color:#3d35b8">&lt;</span><span style="color:#18782f">rect</span> <span style="color:#7a26d0">x</span><span style="color:#c2185b">=</span><span style="color:#18782f">&quot;12&quot;</span> <span style="color:#7a26d0">width</span><span style="color:#c2185b">=</span><span style="color:#18782f">&quot;8&quot;</span> <span style="color:#7a26d0">height</span><span style="color:#c2185b">=</span><span style="color:#18782f">&quot;8&quot;</span> <span style="color:#7a26d0">fill</span><span style="color:#c2185b">=</span><span style="color:#18782f">&quot;white&quot;</span> <span style="color:#1a1a1a">/</span><span style="color:#3d35b8">&gt;</span></div>
<div class="hatch" style="left:734px;top:1686px;width:1018px;height:72px"></div><div class="hatch" style="left:1725px;top:1686px;width:27px;height:72px;background-position:1px 0"></div>
</div></div>
<div class="abs" style="left:1724px;top:282px;width:1px;height:1456px;background:rgba(255,255,255,0.7)"></div>
<div class="abs" style="left:1725px;top:673px;width:13px;height:88px;background:rgba(100,100,115,0.45)"></div>
<div class="abs" style="left:1725px;top:670px;width:27px;height:3px;background:#4a62b8"></div>
<div class="abs" style="left:1744px;top:218px;width:8px;height:1520px;background:linear-gradient(90deg,rgba(0,0,0,0),rgba(0,0,0,0.04))"></div>
<div class="abs" style="left:1752px;top:218px;width:1180px;height:1522px;overflow:hidden">
<div class="abs" style="left:-1752px;top:-218px;width:3160px;height:1778px">
<div class="bg" style="left:1854px;top:282px;width:1018px;background:#f5f6f8"></div>
<div class="ln cur" style="left:1753px;top:282px">1</div>
<div class="code" style="left:1854.0px;top:282px"><span style="color:#bb0e52">import</span> <span style="color:#3d35b8">{</span> <span style="color:#1a1a1a">WorksGallery</span> <span style="color:#3d35b8">}</span> <span style="color:#bb0e52">from</span> <span style="color:#18782f">&quot;@/components/works-gallery&quot;</span></div>
<div class="bg" style="left:1854px;top:318px;width:1018px;background:#d9ebcd"></div>
<div class="ln" style="left:1753px;top:318px">2</div>
<div class="code" style="left:1854.0px;top:318px"><span style="color:#bb0e52">import</span> <span style="color:#3d35b8">{</span> <span style="color:#1a1a1a">ArrowUpRight</span><span style="color:#1a1a1a">,</span> <span style="color:#1a1a1a">Github</span><span style="color:#1a1a1a">,</span> <span style="color:#1a1a1a">Linkedin</span><span style="color:#1a1a1a">,</span> <span style="color:#1a1a1a">Twitter</span> <span style="color:#3d35b8">}</span> <span style="color:#bb0e52">from</span></div>
<div class="bg" style="left:1854px;top:354px;width:1018px;background:#d9ebcd"></div>
<div class="code" style="left:1854.0px;top:354px"><span style="color:#18782f">&quot;lucide-react&quot;</span></div>
<div class="ln" style="left:1753px;top:390px">3</div>
<div class="ln" style="left:1753px;top:426px">4</div>
<div class="code" style="left:1854.0px;top:426px"><span style="color:#bb0e52">export</span> <span style="color:#bb0e52">default</span> <span style="color:#bb0e52">function</span> <span style="color:#6b3bd2">Page</span><span style="color:#3d35b8">(</span><span style="color:#3d35b8">)</span> <span style="color:#3d35b8">{</span></div>
<div class="guide" style="left:1854.0px;top:462px;background:#cfcfcf"></div>
<div class="ln" style="left:1753px;top:462px">5</div>
<div class="code" style="left:1854.0px;top:462px">  <span style="color:#bb0e52">return</span> <span style="color:#ee6a43">(</span></div>
<div class="bg" style="left:1854px;top:498px;width:1018px;background:#e8f1de"></div>
<div class="bg" style="left:2415.6px;top:498px;width:156.0px;background:#d9ebcd"></div>
<div class="guide" style="left:1854.0px;top:498px;background:#c4c6c0"></div>
<div class="guide" style="left:1885.2px;top:498px;background:#c4c6c0"></div>
<div class="ln" style="left:1753px;top:498px">6</div>
<div class="code" style="left:1854.0px;top:498px">    <span style="color:#3d35b8">&lt;</span><span style="color:#18782f">div</span> <span style="color:#7a26d0">className</span><span style="color:#c2185b">=</span><span style="color:#18782f">&quot;min-h-screen bg-background&quot;</span><span style="color:#3d35b8">&gt;</span></div>
<div class="hatch" style="left:1854px;top:534px;width:1018px;height:36px"></div><div class="hatch" style="left:2845px;top:534px;width:27px;height:36px;background-position:1px 0"></div>
<div class="bg" style="left:1854px;top:570px;width:1018px;background:#e8f1de"></div>
<div class="bg" style="left:2743.2px;top:570px;width:128.8px;background:#d9ebcd"></div>
<div class="guide" style="left:1854.0px;top:570px;background:#c4c6c0"></div>
<div class="guide" style="left:1885.2px;top:570px;background:#c4c6c0"></div>
<div class="guide" style="left:1916.4px;top:570px;background:#c4c6c0"></div>
<div class="bg" style="left:1854.0px;top:570px;width:6px;background:#bfdab4"></div>
<div class="ln" style="left:1753px;top:570px">7</div>
<div class="code" style="left:1854.0px;top:570px">      <span style="color:#3d35b8">&lt;</span><span style="color:#18782f">header</span> <span style="color:#7a26d0">className</span><span style="color:#c2185b">=</span><span style="color:#18782f">&quot;fixed top-0 left-0 right-0 z-50 px-8</span></div>
<div class="bg" style="left:1854px;top:606px;width:1018px;background:#d9ebcd"></div>
<div class="guide" style="left:1854.0px;top:606px;background:#b2ceab"></div>
<div class="guide" style="left:1885.2px;top:606px;background:#b2ceab"></div>
<div class="guide" style="left:1916.4px;top:606px;background:#b2ceab"></div>
<div class="code" style="left:1854.0px;top:606px"><span style="color:#18782f">      py-6&quot;</span><span style="color:#3d35b8">&gt;</span></div>
<div class="bg" style="left:1854px;top:642px;width:1018px;background:#e8f1de"></div>
<div class="bg" style="left:1854.0px;top:642px;width:374.4px;background:#d9ebcd"></div>
<div class="bg" style="left:2634.0px;top:642px;width:238.0px;background:#d9ebcd"></div>
<div class="guide" style="left:1854.0px;top:642px;background:#b2ceab"></div>
<div class="guide" style="left:1885.2px;top:642px;background:#b2ceab"></div>
<div class="guide" style="left:1916.4px;top:642px;background:#b2ceab"></div>
<div class="guide" style="left:1947.6px;top:642px;background:#b2ceab"></div>
<div class="ln" style="left:1753px;top:642px">8</div>
<div class="code" style="left:1854.0px;top:642px">        <span style="color:#3d35b8">&lt;</span><span style="color:#18782f">nav</span> <span style="color:#7a26d0">className</span><span style="color:#c2185b">=</span><span style="color:#18782f">&quot;flex items-center justify-between</span></div>
<div class="bg" style="left:1854px;top:678px;width:1018px;background:#e8f1de"></div>
<div class="bg" style="left:1854.0px;top:678px;width:390.0px;background:#d9ebcd"></div>
<div class="guide" style="left:1854.0px;top:678px;background:#b2ceab"></div>
<div class="guide" style="left:1885.2px;top:678px;background:#b2ceab"></div>
<div class="guide" style="left:1916.4px;top:678px;background:#b2ceab"></div>
<div class="guide" style="left:1947.6px;top:678px;background:#b2ceab"></div>
<div class="code" style="left:1854.0px;top:678px"><span style="color:#18782f">        max-w-7xl mx-auto&quot;</span><span style="color:#3d35b8">&gt;</span></div>
<div class="bg" style="left:1854px;top:714px;width:1018px;background:#e8f1de"></div>
<div class="bg" style="left:2025.6px;top:714px;width:46.8px;background:#d9ebcd"></div>
<div class="bg" style="left:2602.8px;top:714px;width:269.2px;background:#d9ebcd"></div>
<div class="guide" style="left:1854.0px;top:714px;background:#c4c6c0"></div>
<div class="guide" style="left:1885.2px;top:714px;background:#c4c6c0"></div>
<div class="guide" style="left:1916.4px;top:714px;background:#c4c6c0"></div>
<div class="guide" style="left:1947.6px;top:714px;background:#c4c6c0"></div>
<div class="guide" style="left:1978.8px;top:714px;background:#c4c6c0"></div>
<div class="ln" style="left:1753px;top:714px">9</div>
<div class="code" style="left:1854.0px;top:714px">          <span style="color:#3d35b8">&lt;</span><span style="color:#18782f">div</span> <span style="color:#7a26d0">className</span><span style="color:#c2185b">=</span><span style="color:#18782f">&quot;flex items-center gap-2&quot;</span><span style="color:#3d35b8">&gt;</span></div>
<div class="bg" style="left:1854px;top:750px;width:1018px;background:#e8f1de"></div>
<div class="bg" style="left:1854.0px;top:750px;width:452.4px;background:#d9ebcd"></div>
<div class="bg" style="left:2368.8px;top:750px;width:452.4px;background:#d9ebcd"></div>
<div class="guide" style="left:1854.0px;top:750px;background:#b2ceab"></div>
<div class="guide" style="left:1885.2px;top:750px;background:#b2ceab"></div>
<div class="guide" style="left:1916.4px;top:750px;background:#b2ceab"></div>
<div class="guide" style="left:1947.6px;top:750px;background:#b2ceab"></div>
<div class="guide" style="left:1978.8px;top:750px;background:#b2ceab"></div>
<div class="guide" style="left:2010.0px;top:750px;background:#b2ceab"></div>
<div class="ln" style="left:1753px;top:750px">10</div>
<div class="code" style="left:1854.0px;top:750px">            <span style="color:#3d35b8">&lt;</span><span style="color:#18782f">span</span> <span style="color:#7a26d0">className</span><span style="color:#c2185b">=</span><span style="color:#18782f">&quot;text-foreground font-sans text-lg</span></div>
<div class="bg" style="left:1854px;top:786px;width:1018px;background:#e8f1de"></div>
<div class="bg" style="left:2119.2px;top:786px;width:124.8px;background:#d9ebcd"></div>
<div class="bg" style="left:2400.0px;top:786px;width:390.0px;background:#d9ebcd"></div>
<div class="guide" style="left:1854.0px;top:786px;background:#c4c6c0"></div>
<div class="guide" style="left:1885.2px;top:786px;background:#c4c6c0"></div>
<div class="guide" style="left:1916.4px;top:786px;background:#c4c6c0"></div>
<div class="guide" style="left:1947.6px;top:786px;background:#c4c6c0"></div>
<div class="guide" style="left:1978.8px;top:786px;background:#c4c6c0"></div>
<div class="guide" style="left:2010.0px;top:786px;background:#c4c6c0"></div>
<div class="code" style="left:1854.0px;top:786px"><span style="color:#18782f">            font-semibold tracking-tight&quot;</span><span style="color:#3d35b8">&gt;</span><span style="color:#1a1a1a">Studio</span> <span style="color:#1a1a1a">Pixel</span><span style="color:#3d35b8">&lt;</span><span style="color:#1a1a1a">/</span><span style="color:#18782f">span</span><span style="color:#3d35b8">&gt;</span></div>
<div class="bg" style="left:1854px;top:822px;width:1018px;background:#e8f1de"></div>
<div class="bg" style="left:2056.8px;top:822px;width:62.4px;background:#d9ebcd"></div>
<div class="bg" style="left:2384.4px;top:822px;width:487.6px;background:#d9ebcd"></div>
<div class="guide" style="left:1854.0px;top:822px;background:#c4c6c0"></div>
<div class="guide" style="left:1885.2px;top:822px;background:#c4c6c0"></div>
<div class="guide" style="left:1916.4px;top:822px;background:#c4c6c0"></div>
<div class="guide" style="left:1947.6px;top:822px;background:#c4c6c0"></div>
<div class="guide" style="left:1978.8px;top:822px;background:#c4c6c0"></div>
<div class="guide" style="left:2010.0px;top:822px;background:#c4c6c0"></div>
<div class="ln" style="left:1753px;top:822px">11</div>
<div class="code" style="left:1854.0px;top:822px">            <span style="color:#3d35b8">&lt;</span><span style="color:#18782f">span</span> <span style="color:#7a26d0">className</span><span style="color:#c2185b">=</span><span style="color:#18782f">&quot;text-muted-foreground text-xs&quot;</span><span style="color:#3d35b8">&gt;</span><span style="color:#1a1a1a">®</span><span style="color:#3d35b8">&lt;</span><span style="color:#1a1a1a">/</span></div>
<div class="bg" style="left:1854px;top:858px;width:1018px;background:#d9ebcd"></div>
<div class="guide" style="left:1854.0px;top:858px;background:#b2ceab"></div>
<div class="guide" style="left:1885.2px;top:858px;background:#b2ceab"></div>
<div class="guide" style="left:1916.4px;top:858px;background:#b2ceab"></div>
<div class="guide" style="left:1947.6px;top:858px;background:#b2ceab"></div>
<div class="guide" style="left:1978.8px;top:858px;background:#b2ceab"></div>
<div class="guide" style="left:2010.0px;top:858px;background:#b2ceab"></div>
<div class="code" style="left:1854.0px;top:858px">            <span style="color:#18782f">span</span><span style="color:#3d35b8">&gt;</span></div>
<div class="hatch" style="left:1854px;top:894px;width:1018px;height:36px"></div><div class="hatch" style="left:2845px;top:894px;width:27px;height:36px;background-position:1px 0"></div>
<div class="bg" style="left:1854px;top:930px;width:1018px;background:#e8f1de"></div>
<div class="bg" style="left:2025.6px;top:930px;width:846.4px;background:#d9ebcd"></div>
<div class="guide" style="left:1854.0px;top:930px;background:#c4c6c0"></div>
<div class="guide" style="left:1885.2px;top:930px;background:#c4c6c0"></div>
<div class="guide" style="left:1916.4px;top:930px;background:#c4c6c0"></div>
<div class="guide" style="left:1947.6px;top:930px;background:#c4c6c0"></div>
<div class="guide" style="left:1978.8px;top:930px;background:#c4c6c0"></div>
<div class="ln" style="left:1753px;top:930px">12</div>
<div class="code" style="left:1854.0px;top:930px">          <span style="color:#3d35b8">&lt;</span><span style="color:#1a1a1a">/</span><span style="color:#18782f">div</span><span style="color:#3d35b8">&gt;</span></div>
<div class="bg" style="left:1854px;top:966px;width:1018px;background:#d9ebcd"></div>
<div class="guide" style="left:1854.0px;top:966px;background:#b2ceab"></div>
<div class="guide" style="left:1885.2px;top:966px;background:#b2ceab"></div>
<div class="guide" style="left:1916.4px;top:966px;background:#b2ceab"></div>
<div class="guide" style="left:1947.6px;top:966px;background:#b2ceab"></div>
<div class="guide" style="left:1978.8px;top:966px;background:#b2ceab"></div>
<div class="ln" style="left:1753px;top:966px">13</div>
<div class="bg" style="left:1854px;top:1002px;width:1018px;background:#e8f1de"></div>
<div class="bg" style="left:1854.0px;top:1002px;width:218.4px;background:#d9ebcd"></div>
<div class="bg" style="left:2259.6px;top:1002px;width:612.4px;background:#d9ebcd"></div>
<div class="guide" style="left:1854.0px;top:1002px;background:#b2ceab"></div>
<div class="guide" style="left:1885.2px;top:1002px;background:#b2ceab"></div>
<div class="guide" style="left:1916.4px;top:1002px;background:#b2ceab"></div>
<div class="guide" style="left:1947.6px;top:1002px;background:#b2ceab"></div>
<div class="guide" style="left:1978.8px;top:1002px;background:#b2ceab"></div>
<div class="ln" style="left:1753px;top:1002px">14</div>
<div class="code" style="left:1854.0px;top:1002px">          <span style="color:#3d35b8">&lt;</span><span style="color:#18782f">div</span> <span style="color:#7a26d0">className</span><span style="color:#c2185b">=</span><span style="color:#18782f">&quot;hidden md:flex items-center gap-8</span></div>
<div class="bg" style="left:1854px;top:1038px;width:1018px;background:#e8f1de"></div>
<div class="bg" style="left:1854.0px;top:1038px;width:265.2px;background:#d9ebcd"></div>
<div class="guide" style="left:1854.0px;top:1038px;background:#b2ceab"></div>
<div class="guide" style="left:1885.2px;top:1038px;background:#b2ceab"></div>
<div class="guide" style="left:1916.4px;top:1038px;background:#b2ceab"></div>
<div class="guide" style="left:1947.6px;top:1038px;background:#b2ceab"></div>
<div class="guide" style="left:1978.8px;top:1038px;background:#b2ceab"></div>
<div class="code" style="left:1854.0px;top:1038px"><span style="color:#18782f">          text-sm&quot;</span><span style="color:#3d35b8">&gt;</span></div>
<div class="bg" style="left:1854px;top:1074px;width:1018px;background:#e8f1de"></div>
<div class="bg" style="left:2197.2px;top:1074px;width:62.4px;background:#d9ebcd"></div>
<div class="bg" style="left:2540.4px;top:1074px;width:249.6px;background:#d9ebcd"></div>
<div class="guide" style="left:1854.0px;top:1074px;background:#c4c6c0"></div>
<div class="guide" style="left:1885.2px;top:1074px;background:#c4c6c0"></div>
<div class="guide" style="left:1916.4px;top:1074px;background:#c4c6c0"></div>
<div class="guide" style="left:1947.6px;top:1074px;background:#c4c6c0"></div>
<div class="guide" style="left:1978.8px;top:1074px;background:#c4c6c0"></div>
<div class="guide" style="left:2010.0px;top:1074px;background:#c4c6c0"></div>
<div class="bg" style="left:1854.0px;top:1074px;width:6px;background:#bfdab4"></div>
<div class="ln" style="left:1753px;top:1074px">15</div>
<div class="code" style="left:1854.0px;top:1074px">            <span style="color:#3d35b8">&lt;</span><span style="color:#18782f">a</span> <span style="color:#7a26d0">href</span><span style="color:#c2185b">=</span><span style="color:#18782f">&quot;#work&quot;</span> <span style="color:#7a26d0">className</span><span style="color:#c2185b">=</span><span style="color:#18782f">&quot;text-muted-foreground</span></div>
<div class="bg" style="left:1854px;top:1110px;width:1018px;background:#e8f1de"></div>
<div class="bg" style="left:2212.8px;top:1110px;width:156.0px;background:#d9ebcd"></div>
<div class="guide" style="left:1854.0px;top:1110px;background:#c4c6c0"></div>
<div class="guide" style="left:1885.2px;top:1110px;background:#c4c6c0"></div>
<div class="guide" style="left:1916.4px;top:1110px;background:#c4c6c0"></div>
<div class="guide" style="left:1947.6px;top:1110px;background:#c4c6c0"></div>
<div class="guide" style="left:1978.8px;top:1110px;background:#c4c6c0"></div>
<div class="guide" style="left:2010.0px;top:1110px;background:#c4c6c0"></div>
<div class="code" style="left:1854.0px;top:1110px"><span style="color:#18782f">            hover:text-foreground transition-colors&quot;</span><span style="color:#3d35b8">&gt;</span></div>
<div class="bg" style="left:1854px;top:1146px;width:1018px;background:#e8f1de"></div>
<div class="bg" style="left:2072.4px;top:1146px;width:62.4px;background:#d9ebcd"></div>
<div class="guide" style="left:1854.0px;top:1146px;background:#c4c6c0"></div>
<div class="guide" style="left:1885.2px;top:1146px;background:#c4c6c0"></div>
<div class="guide" style="left:1916.4px;top:1146px;background:#c4c6c0"></div>
<div class="guide" style="left:1947.6px;top:1146px;background:#c4c6c0"></div>
<div class="guide" style="left:1978.8px;top:1146px;background:#c4c6c0"></div>
<div class="guide" style="left:2010.0px;top:1146px;background:#c4c6c0"></div>
<div class="guide" style="left:2041.2px;top:1146px;background:#c4c6c0"></div>
<div class="ln" style="left:1753px;top:1146px">16</div>
<div class="code" style="left:1854.0px;top:1146px">              <span style="color:#1a1a1a">Work</span></div>
<div class="guide" style="left:1854.0px;top:1182px;background:#cfcfcf"></div>
<div class="guide" style="left:1885.2px;top:1182px;background:#cfcfcf"></div>
<div class="guide" style="left:1916.4px;top:1182px;background:#cfcfcf"></div>
<div class="guide" style="left:1947.6px;top:1182px;background:#cfcfcf"></div>
<div class="guide" style="left:1978.8px;top:1182px;background:#cfcfcf"></div>
<div class="guide" style="left:2010.0px;top:1182px;background:#cfcfcf"></div>
<div class="ln" style="left:1753px;top:1182px">17</div>
<div class="code" style="left:1854.0px;top:1182px">            <span style="color:#3d35b8">&lt;</span><span style="color:#1a1a1a">/</span><span style="color:#18782f">a</span><span style="color:#3d35b8">&gt;</span></div>
<div class="bg" style="left:1854px;top:1218px;width:1018px;background:#e8f1de"></div>
<div class="bg" style="left:2197.2px;top:1218px;width:78.0px;background:#d9ebcd"></div>
<div class="bg" style="left:2556.0px;top:1218px;width:249.6px;background:#d9ebcd"></div>
<div class="guide" style="left:1854.0px;top:1218px;background:#c4c6c0"></div>
<div class="guide" style="left:1885.2px;top:1218px;background:#c4c6c0"></div>
<div class="guide" style="left:1916.4px;top:1218px;background:#c4c6c0"></div>
<div class="guide" style="left:1947.6px;top:1218px;background:#c4c6c0"></div>
<div class="guide" style="left:1978.8px;top:1218px;background:#c4c6c0"></div>
<div class="guide" style="left:2010.0px;top:1218px;background:#c4c6c0"></div>
<div class="ln" style="left:1753px;top:1218px">18</div>
<div class="code" style="left:1854.0px;top:1218px">            <span style="color:#3d35b8">&lt;</span><span style="color:#18782f">a</span> <span style="color:#7a26d0">href</span><span style="color:#c2185b">=</span><span style="color:#18782f">&quot;#about&quot;</span> <span style="color:#7a26d0">className</span><span style="color:#c2185b">=</span><span style="color:#18782f">&quot;text-muted-foreground</span></div>
<div class="bg" style="left:1854px;top:1254px;width:1018px;background:#e8f1de"></div>
<div class="bg" style="left:2212.8px;top:1254px;width:156.0px;background:#d9ebcd"></div>
<div class="guide" style="left:1854.0px;top:1254px;background:#c4c6c0"></div>
<div class="guide" style="left:1885.2px;top:1254px;background:#c4c6c0"></div>
<div class="guide" style="left:1916.4px;top:1254px;background:#c4c6c0"></div>
<div class="guide" style="left:1947.6px;top:1254px;background:#c4c6c0"></div>
<div class="guide" style="left:1978.8px;top:1254px;background:#c4c6c0"></div>
<div class="guide" style="left:2010.0px;top:1254px;background:#c4c6c0"></div>
<div class="code" style="left:1854.0px;top:1254px"><span style="color:#18782f">            hover:text-foreground transition-colors&quot;</span><span style="color:#3d35b8">&gt;</span></div>
<div class="bg" style="left:1854px;top:1290px;width:1018px;background:#e8f1de"></div>
<div class="bg" style="left:2072.4px;top:1290px;width:78.0px;background:#d9ebcd"></div>
<div class="guide" style="left:1854.0px;top:1290px;background:#c4c6c0"></div>
<div class="guide" style="left:1885.2px;top:1290px;background:#c4c6c0"></div>
<div class="guide" style="left:1916.4px;top:1290px;background:#c4c6c0"></div>
<div class="guide" style="left:1947.6px;top:1290px;background:#c4c6c0"></div>
<div class="guide" style="left:1978.8px;top:1290px;background:#c4c6c0"></div>
<div class="guide" style="left:2010.0px;top:1290px;background:#c4c6c0"></div>
<div class="guide" style="left:2041.2px;top:1290px;background:#c4c6c0"></div>
<div class="ln" style="left:1753px;top:1290px">19</div>
<div class="code" style="left:1854.0px;top:1290px">              <span style="color:#1a1a1a">About</span></div>
<div class="guide" style="left:1854.0px;top:1326px;background:#cfcfcf"></div>
<div class="guide" style="left:1885.2px;top:1326px;background:#cfcfcf"></div>
<div class="guide" style="left:1916.4px;top:1326px;background:#cfcfcf"></div>
<div class="guide" style="left:1947.6px;top:1326px;background:#cfcfcf"></div>
<div class="guide" style="left:1978.8px;top:1326px;background:#cfcfcf"></div>
<div class="guide" style="left:2010.0px;top:1326px;background:#cfcfcf"></div>
<div class="ln" style="left:1753px;top:1326px">20</div>
<div class="code" style="left:1854.0px;top:1326px">            <span style="color:#3d35b8">&lt;</span><span style="color:#1a1a1a">/</span><span style="color:#18782f">a</span><span style="color:#3d35b8">&gt;</span></div>
<div class="bg" style="left:1854px;top:1362px;width:1018px;background:#e8f1de"></div>
<div class="bg" style="left:2197.2px;top:1362px;width:124.8px;background:#d9ebcd"></div>
<div class="guide" style="left:1854.0px;top:1362px;background:#c4c6c0"></div>
<div class="guide" style="left:1885.2px;top:1362px;background:#c4c6c0"></div>
<div class="guide" style="left:1916.4px;top:1362px;background:#c4c6c0"></div>
<div class="guide" style="left:1947.6px;top:1362px;background:#c4c6c0"></div>
<div class="guide" style="left:1978.8px;top:1362px;background:#c4c6c0"></div>
<div class="guide" style="left:2010.0px;top:1362px;background:#c4c6c0"></div>
<div class="ln" style="left:1753px;top:1362px">21</div>
<div class="code" style="left:1854.0px;top:1362px">            <span style="color:#3d35b8">&lt;</span><span style="color:#18782f">a</span> <span style="color:#7a26d0">href</span><span style="color:#c2185b">=</span><span style="color:#18782f">&quot;#services&quot;</span></div>
<div class="bg" style="left:1854px;top:1398px;width:1018px;background:#e8f1de"></div>
<div class="bg" style="left:2290.8px;top:1398px;width:249.6px;background:#d9ebcd"></div>
<div class="guide" style="left:1854.0px;top:1398px;background:#c4c6c0"></div>
<div class="guide" style="left:1885.2px;top:1398px;background:#c4c6c0"></div>
<div class="guide" style="left:1916.4px;top:1398px;background:#c4c6c0"></div>
<div class="guide" style="left:1947.6px;top:1398px;background:#c4c6c0"></div>
<div class="guide" style="left:1978.8px;top:1398px;background:#c4c6c0"></div>
<div class="guide" style="left:2010.0px;top:1398px;background:#c4c6c0"></div>
<div class="code" style="left:1854.0px;top:1398px">            <span style="color:#7a26d0">className</span><span style="color:#c2185b">=</span><span style="color:#18782f">&quot;text-muted-foreground</span></div>
<div class="bg" style="left:1854px;top:1434px;width:1018px;background:#e8f1de"></div>
<div class="bg" style="left:2212.8px;top:1434px;width:156.0px;background:#d9ebcd"></div>
<div class="guide" style="left:1854.0px;top:1434px;background:#c4c6c0"></div>
<div class="guide" style="left:1885.2px;top:1434px;background:#c4c6c0"></div>
<div class="guide" style="left:1916.4px;top:1434px;background:#c4c6c0"></div>
<div class="guide" style="left:1947.6px;top:1434px;background:#c4c6c0"></div>
<div class="guide" style="left:1978.8px;top:1434px;background:#c4c6c0"></div>
<div class="guide" style="left:2010.0px;top:1434px;background:#c4c6c0"></div>
<div class="code" style="left:1854.0px;top:1434px"><span style="color:#18782f">            hover:text-foreground transition-colors&quot;</span><span style="color:#3d35b8">&gt;</span></div>
<div class="bg" style="left:1854px;top:1470px;width:1018px;background:#e8f1de"></div>
<div class="bg" style="left:2072.4px;top:1470px;width:124.8px;background:#d9ebcd"></div>
<div class="guide" style="left:1854.0px;top:1470px;background:#c4c6c0"></div>
<div class="guide" style="left:1885.2px;top:1470px;background:#c4c6c0"></div>
<div class="guide" style="left:1916.4px;top:1470px;background:#c4c6c0"></div>
<div class="guide" style="left:1947.6px;top:1470px;background:#c4c6c0"></div>
<div class="guide" style="left:1978.8px;top:1470px;background:#c4c6c0"></div>
<div class="guide" style="left:2010.0px;top:1470px;background:#c4c6c0"></div>
<div class="guide" style="left:2041.2px;top:1470px;background:#c4c6c0"></div>
<div class="ln" style="left:1753px;top:1470px">22</div>
<div class="code" style="left:1854.0px;top:1470px">              <span style="color:#1a1a1a">Services</span></div>
<div class="guide" style="left:1854.0px;top:1506px;background:#cfcfcf"></div>
<div class="guide" style="left:1885.2px;top:1506px;background:#cfcfcf"></div>
<div class="guide" style="left:1916.4px;top:1506px;background:#cfcfcf"></div>
<div class="guide" style="left:1947.6px;top:1506px;background:#cfcfcf"></div>
<div class="guide" style="left:1978.8px;top:1506px;background:#cfcfcf"></div>
<div class="guide" style="left:2010.0px;top:1506px;background:#cfcfcf"></div>
<div class="ln" style="left:1753px;top:1506px">23</div>
<div class="code" style="left:1854.0px;top:1506px">            <span style="color:#3d35b8">&lt;</span><span style="color:#1a1a1a">/</span><span style="color:#18782f">a</span><span style="color:#3d35b8">&gt;</span></div>
<div class="bg" style="left:1854px;top:1542px;width:1018px;background:#e8f1de"></div>
<div class="bg" style="left:2041.2px;top:1542px;width:830.8px;background:#d9ebcd"></div>
<div class="guide" style="left:1854.0px;top:1542px;background:#c4c6c0"></div>
<div class="guide" style="left:1885.2px;top:1542px;background:#c4c6c0"></div>
<div class="guide" style="left:1916.4px;top:1542px;background:#c4c6c0"></div>
<div class="guide" style="left:1947.6px;top:1542px;background:#c4c6c0"></div>
<div class="guide" style="left:1978.8px;top:1542px;background:#c4c6c0"></div>
<div class="guide" style="left:2010.0px;top:1542px;background:#c4c6c0"></div>
<div class="ln" style="left:1753px;top:1542px">24</div>
<div class="code" style="left:1854.0px;top:1542px">            <span style="color:#3d35b8">&lt;</span><span style="color:#18782f">a</span></div>
<div class="bg" style="left:1854px;top:1578px;width:1018px;background:#d9ebcd"></div>
<div class="guide" style="left:1854.0px;top:1578px;background:#b2ceab"></div>
<div class="guide" style="left:1885.2px;top:1578px;background:#b2ceab"></div>
<div class="guide" style="left:1916.4px;top:1578px;background:#b2ceab"></div>
<div class="guide" style="left:1947.6px;top:1578px;background:#b2ceab"></div>
<div class="guide" style="left:1978.8px;top:1578px;background:#b2ceab"></div>
<div class="guide" style="left:2010.0px;top:1578px;background:#b2ceab"></div>
<div class="guide" style="left:2041.2px;top:1578px;background:#b2ceab"></div>
<div class="ln" style="left:1753px;top:1578px">25</div>
<div class="code" style="left:1854.0px;top:1578px">              <span style="color:#7a26d0">href</span><span style="color:#c2185b">=</span><span style="color:#18782f">&quot;#contact&quot;</span></div>
<div class="bg" style="left:1854px;top:1614px;width:1018px;background:#d9ebcd"></div>
<div class="guide" style="left:1854.0px;top:1614px;background:#b2ceab"></div>
<div class="guide" style="left:1885.2px;top:1614px;background:#b2ceab"></div>
<div class="guide" style="left:1916.4px;top:1614px;background:#b2ceab"></div>
<div class="guide" style="left:1947.6px;top:1614px;background:#b2ceab"></div>
<div class="guide" style="left:1978.8px;top:1614px;background:#b2ceab"></div>
<div class="guide" style="left:2010.0px;top:1614px;background:#b2ceab"></div>
<div class="guide" style="left:2041.2px;top:1614px;background:#b2ceab"></div>
<div class="ln" style="left:1753px;top:1614px">26</div>
<div class="code" style="left:1854.0px;top:1614px">              <span style="color:#7a26d0">className</span><span style="color:#c2185b">=</span><span style="color:#18782f">&quot;flex items-center gap-1.5</span></div>
<div class="bg" style="left:1854px;top:1650px;width:1018px;background:#d9ebcd"></div>
<div class="guide" style="left:1854.0px;top:1650px;background:#b2ceab"></div>
<div class="guide" style="left:1885.2px;top:1650px;background:#b2ceab"></div>
<div class="guide" style="left:1916.4px;top:1650px;background:#b2ceab"></div>
<div class="guide" style="left:1947.6px;top:1650px;background:#b2ceab"></div>
<div class="guide" style="left:1978.8px;top:1650px;background:#b2ceab"></div>
<div class="guide" style="left:2010.0px;top:1650px;background:#b2ceab"></div>
<div class="guide" style="left:2041.2px;top:1650px;background:#b2ceab"></div>
<div class="code" style="left:1854.0px;top:1650px"><span style="color:#18782f">              text-foreground bg-secondary hover:bg-secondary/</span></div>
<div class="bg" style="left:1854px;top:1686px;width:1018px;background:#d9ebcd"></div>
<div class="guide" style="left:1854.0px;top:1686px;background:#b2ceab"></div>
<div class="guide" style="left:1885.2px;top:1686px;background:#b2ceab"></div>
<div class="guide" style="left:1916.4px;top:1686px;background:#b2ceab"></div>
<div class="guide" style="left:1947.6px;top:1686px;background:#b2ceab"></div>
<div class="guide" style="left:1978.8px;top:1686px;background:#b2ceab"></div>
<div class="guide" style="left:2010.0px;top:1686px;background:#b2ceab"></div>
<div class="guide" style="left:2041.2px;top:1686px;background:#b2ceab"></div>
<div class="code" style="left:1854.0px;top:1686px"><span style="color:#18782f">              80 px-4 py-2 rounded-full transition-colors&quot;</span></div>
<div class="bg" style="left:1854px;top:1722px;width:1018px;background:#e8f1de"></div>
<div class="bg" style="left:1854.0px;top:1722px;width:202.8px;background:#d9ebcd"></div>
<div class="guide" style="left:1854.0px;top:1722px;background:#b2ceab"></div>
<div class="guide" style="left:1885.2px;top:1722px;background:#b2ceab"></div>
<div class="guide" style="left:1916.4px;top:1722px;background:#b2ceab"></div>
<div class="guide" style="left:1947.6px;top:1722px;background:#b2ceab"></div>
<div class="guide" style="left:1978.8px;top:1722px;background:#b2ceab"></div>
<div class="guide" style="left:2010.0px;top:1722px;background:#b2ceab"></div>
<div class="ln" style="left:1753px;top:1722px">27</div>
<div class="code" style="left:1854.0px;top:1722px">            <span style="color:#3d35b8">&gt;</span></div>
</div></div>
<div class="abs" style="left:2844px;top:282px;width:1px;height:1456px;background:rgba(255,255,255,0.7)"></div>
<div class="abs" style="left:2845px;top:266px;width:27px;height:4px;background:#4a62b8"></div>
<div class="abs" style="left:2872px;top:262px;width:60px;height:488px;background:#ebebeb"></div>
<div class="abs" style="left:2902px;top:278px;width:30px;height:24px;background:#c4dfc8"></div>
<div class="abs" style="left:2872px;top:334px;width:30px;height:136px;background:#dcb8cb"></div>
<div class="abs" style="left:2902px;top:335px;width:30px;height:192px;background:#c4dfc8"></div>
<div class="abs" style="left:2872px;top:558px;width:30px;height:24px;background:#dcb8cb"></div>
<div class="abs" style="left:2902px;top:561px;width:30px;height:34px;background:#c4dfc8"></div>
<div class="abs" style="left:2872px;top:603px;width:30px;height:24px;background:#dcb8cb"></div>
<div class="abs" style="left:2902px;top:605px;width:30px;height:46px;background:#c4dfc8"></div>
<div class="abs" style="left:2872px;top:660px;width:30px;height:64px;background:#dcb8cb"></div>
<div class="abs" style="left:2902px;top:661px;width:30px;height:63px;background:#c4dfc8"></div>
<div class="abs" style="left:2872px;top:724px;width:30px;height:26px;background:#f2c7cf"></div>
<div class="abs" style="left:2902px;top:724px;width:30px;height:50px;background:#cdefd6"></div>
<div class="abs" style="left:2902px;top:808px;width:30px;height:226px;background:#cdefd6"></div>
<div class="abs" style="left:2872px;top:1052px;width:30px;height:11px;background:#f2c7cf"></div>
<div class="abs" style="left:2902px;top:1056px;width:30px;height:12px;background:#cdefd6"></div>
<div class="abs" style="left:2902px;top:1090px;width:30px;height:598px;background:#cdefd6"></div>
<div class="abs" style="left:226px;top:1680px;width:2705px;height:60px;background:linear-gradient(180deg,rgba(0,0,0,0),rgba(0,0,0,0.055))"></div>
<div class="abs" style="left:242px;top:1669px;width:55px;height:55px;border:2px solid #e6e6e6;border-radius:12px;background:#fff"></div>
<svg class="abs" style="left:248px;top:1678px" width="40" height="36" viewBox="0 0 40 36" fill="none" stroke="#111" stroke-width="3.3" stroke-linecap="round" stroke-linejoin="round"><path d="M8.9 8.8V27"/><path d="M33 18H14.8"/><path d="M23 9.5L14.7 18 23 26.5"/></svg>
</div></div></body></html>
